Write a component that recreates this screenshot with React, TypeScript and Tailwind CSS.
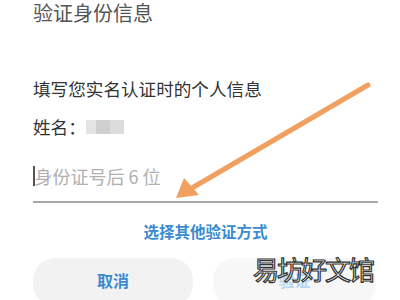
export default function App() {
  return (
    <div
      className="relative w-[400px] h-[300px] overflow-hidden bg-white"
      style={{ fontFamily: '"Noto Sans CJK SC", "Noto Sans", sans-serif' }}
    >
      <div className="flex flex-col pl-[33px] pr-[22px]">
        <div className="text-[20px] leading-[25px] text-[#555]">验证身份信息</div>

        <div className="mt-[52px] text-[17.6px] leading-[24px] text-[#333]">
          填写您实名认证时的个人信息
        </div>

        <div className="mt-[14px] flex items-center text-[17.6px] leading-[24px] text-[#333]">
          <span>姓名：</span>
          <span className="flex">
            <span className="w-[10px] h-[14px] bg-[#e4e4e4]" />
            <span className="w-[14px] h-[14px] bg-[#cfcfcf]" />
            <span className="w-[14px] h-[14px] bg-[#dcdcdc]" />
          </span>
        </div>

        <div className="mt-[25px] flex items-center h-[24px]">
          <span className="w-[1.5px] h-[20px] bg-[#555]" />
          <span className="text-[18px] leading-[24px] text-[#b0b0b0]">身份证号后 6 位</span>
        </div>
        <div className="mt-[13px] h-[2px] bg-[#a8a8a8]" />

        <div className="mt-[18px] text-center text-[15.5px] leading-[20px] font-bold text-[#3a8bd0]">
          选择其他验证方式
        </div>

        <div className="mt-[17px] flex gap-[20px] pr-[2px]">
          <div className="w-[160px] h-[48px] rounded-[22px] bg-[#f2f2f2] flex items-center justify-center text-[16px] font-bold text-[#3a8bd0] pb-[4px]">
            取消
          </div>
          <div className="flex-1 h-[48px] rounded-[22px] bg-[#f7f7f7] flex items-center justify-center text-[16px] font-bold text-[#b5d5f0] pb-[4px]">
            验证
          </div>
        </div>
      </div>

      <svg className="absolute left-0 top-0" width="400" height="300" viewBox="0 0 400 300">
        <line x1="368" y1="85" x2="192" y2="188" stroke="#f2a060" strokeWidth="5" strokeLinecap="round" />
        <polygon points="176,198 184,178 199,195" fill="#f2a060" />
      </svg>

      <div
        className="absolute left-[253px] top-[253px] text-[26px] leading-[32px] text-white tracking-[-2px]"
        style={{ WebkitTextStroke: "1.2px #333", fontFamily: '"Noto Sans CJK SC", sans-serif' }}
      >
        易坊好文馆
      </div>
    </div>
  );
}
